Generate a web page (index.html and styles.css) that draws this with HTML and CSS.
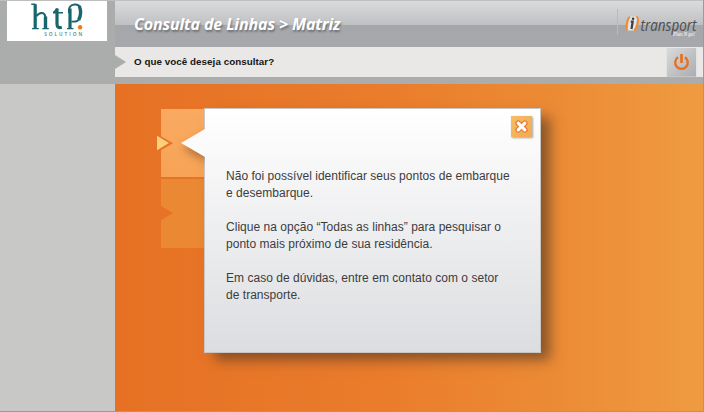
FILE: index.html
```html
<!DOCTYPE html>
<html lang="pt-BR">
<head>
<meta charset="utf-8">
<title>Consulta de Linhas</title>
<link rel="stylesheet" href="styles.css">
</head>
<body>
<div class="app">
  <aside class="sidebar">
    <div class="brand">
      <svg class="brand-logo" width="100" height="40" viewBox="0 0 100 40" role="img" aria-label="htp solution">
        <g fill="none" stroke="#17656d" stroke-linejoin="round">
          <path stroke-width="3.2" d="M28.2 3.2V27.8M50 7.5V23Q50 27.8 54.8 26.2M63 7.5V27.8"/>
          <path stroke-width="1.4" d="M24.3 3.2H28.5M25 27.6H31.8M46 11.8H56M60 27.6H66.4M35.3 27.6H41.8"/>
          <path stroke-width="2" d="M29.4 15.2Q31.8 11.8 35 12Q38.3 12.4 38.4 17M46.5 11.6L50.5 7.6M62 12Q60.8 4.2 67.5 3.6Q71.5 3.3 73 6"/>
          <path stroke-width="3.4" d="M38.5 15.5V27.8M72.3 5Q75.2 12.5 71.7 18.8"/>
          <path stroke-width="1.8" d="M72.2 18.2Q69.8 21.4 64.5 20.5"/>
        </g>
        <circle cx="73.1" cy="26.3" r="2.2" fill="#f07a13"/>
        <text class="brand-sub" x="37.2" y="34.5" textLength="38">SOLUTION</text>
      </svg>
    </div>
  </aside>
  <main class="main">
    <header class="topbar">
      <h1 class="title">Consulta de Linhas &gt; Matriz</h1>
      <svg class="product" width="86" height="36" viewBox="0 0 86 36" role="img" aria-label="i transport">
        <path d="M.5 0V26" stroke="#b9babc"/>
        <path d="M12.8 7.6H20.4L17.8 21.4H10.2Z" fill="#e6e6e6"/>
        <path d="M13.2 8Q11 8.4 9.8 14.5Q8.8 20 10.6 21.2M19.2 7.8Q21.9 8 20.6 14.5Q19.5 20.2 17 21.2" fill="none" stroke="#f28a2e" stroke-width="1.9"/>
        <path d="M13.8 12.7H15.7L14.5 20" fill="none" stroke="#3f3f41" stroke-width="2.2"/>
        <circle cx="16.1" cy="9.8" r="1.3" fill="#3f3f41"/>
        <text class="product-name" x="23.5" y="22" textLength="56" lengthAdjust="spacingAndGlyphs">transport</text>
        <text class="product-tag" x="56" y="27" textLength="22" lengthAdjust="spacingAndGlyphs">Plan N go!</text>
      </svg>
    </header>
    <div class="question">
      <span class="question-text">O que você deseja consultar?</span>
      <button class="power" aria-label="Sair">
        <svg width="18" height="18" viewBox="0 0 18 18">
          <path d="M5 4.3A6.3 6.3 0 1 0 12 4.3" fill="none" stroke="#e96d1d" stroke-width="2.3"/>
          <path d="M8.5 1V10" stroke="#e96d1d" stroke-width="2.6"/>
        </svg>
      </button>
    </div>
    <section class="stage">
      <nav class="tabs">
        <div class="tab tab-active">
          <svg class="tab-arrow" width="17" height="18" viewBox="0 0 17 18">
            <path d="M3.5 2V16.5L16 9.3Z" fill="#e67328"/>
            <path d="M0 1.8V16.2L12 9Z" fill="#fcd07b"/>
          </svg>
        </div>
        <div class="tab"></div>
      </nav>
      <div class="dialog">
        <button class="close" aria-label="Fechar">
          <svg width="15" height="15" viewBox="0 0 15 15">
            <path d="M4.2 4.2L10.8 10.8M10.8 4.2L4.2 10.8" stroke="#e97935" stroke-width="5.6" stroke-linecap="round"/>
            <path d="M4.2 4.2L10.8 10.8M10.8 4.2L4.2 10.8" stroke="#fff" stroke-width="3.1" stroke-linecap="round"/>
          </svg>
        </button>
        <div class="message">
          <p>Não foi possível identificar seus pontos de embarque<br>e desembarque.</p>
          <p>Clique na opção “Todas as linhas” para pesquisar o<br>ponto mais próximo de sua residência.</p>
          <p>Em caso de dúvidas, entre em contato com o setor<br>de transporte.</p>
        </div>
      </div>
    </section>
  </main>
</div>
</body>
</html>
```
FILE: styles.css
```css
* { box-sizing: border-box; }
body { margin: 0; font-family: "Liberation Sans", Arial, sans-serif; overflow: hidden; }
button { border: 0; padding: 0; display: flex; align-items: center; justify-content: center; }

.app {
  display: grid;
  grid-template-columns: 115px 1fr;
  width: 704px;
  height: 412px;
  border-right: 1px solid #929bab;
  border-bottom: 1px solid #929bab;
}

.sidebar { background: linear-gradient(#abadac 83px, #c8c8c6 83px); border-top: 1px solid #bdbfbe; padding-left: 7px; }
.brand { width: 100px; height: 40px; background: #fff; }
.brand-logo { display: block; }
.brand-sub { font: 600 4.8px "Open Sans", sans-serif; fill: #4b7c81; }

.main { display: flex; flex-direction: column; }
.topbar {
  height: 47px;
  flex: none;
  display: flex;
  align-items: flex-start;
  justify-content: space-between;
  padding: 0 0 0 19px;
  border-top: 1px solid #bfc0c1;
  background: linear-gradient(#dadbdd 0, #bfc0c2 24px, #a5a7aa 24px, #a7a8ab 100%);
}
.title {
  margin: 12px 0 0;
  font: italic 700 16px/22px "Open Sans", sans-serif;
  letter-spacing: -.12px;
  color: #fff;
  text-shadow: 1px 2px 2px rgba(70, 70, 75, .55);
  white-space: nowrap;
}
.product { margin-top: 8px; overflow: visible; }
.product-name { font: italic 500 17px "Open Sans", sans-serif; fill: #4c4d50; }
.product-tag { font: italic 5.5px "Liberation Serif", serif; fill: #fff; }

.question {
  position: relative;
  flex: none;
  display: flex;
  align-items: flex-start;
  justify-content: space-between;
  height: 37px;
  padding: 0 7px 0 19px;
  background: linear-gradient(#e9e8e7 30px, #abadac 30px);
}
.question::before {
  content: "";
  position: absolute;
  left: 0;
  top: 8px;
  border-left: 11px solid #abadac;
  border-top: 7px solid transparent;
  border-bottom: 7px solid transparent;
}
.question-text { font-size: 9.8px; font-weight: 700; line-height: 30px; letter-spacing: .05px; color: #161616; white-space: nowrap; }
.power { width: 29px; height: 28px; margin-top: 1px; background: linear-gradient(135deg, #d9dadb, #abadb0); box-shadow: 0 1px 1px #c4c4c4; }

.stage {
  flex: 1;
  display: flex;
  padding: 24px 0 0 46px;
  background: linear-gradient(90deg, #e67124, #ea7c2c 45%, #ec8b35 75%, #ef9b42);
}
.tabs { width: 43px; display: flex; flex-direction: column; gap: 2px; padding-top: 1px; }
.tab { position: relative; height: 69px; background: #ea8833; }
.tab-active { height: 68px; background: linear-gradient(#f9aa61, #f7a355); }
.tab:last-child::before {
  content: "";
  position: absolute;
  top: 27px;
  left: 0;
  border-left: 12px solid #e67328;
  border-top: 7.5px solid transparent;
  border-bottom: 7.5px solid transparent;
}
.tab-arrow { position: absolute; left: -4px; top: 25px; }

.dialog {
  position: relative;
  width: 337px;
  height: 245px;
  border: 1px solid #cbc5bf;
  background: linear-gradient(#fff, #dcdde0);
  box-shadow: 10px 8px 12px -1px rgba(70, 50, 35, .6);
}
.dialog::before {
  content: "";
  position: absolute;
  left: -24px;
  top: 20px;
  border-right: 24px solid #fbfbfb;
  border-top: 14px solid transparent;
  border-bottom: 14px solid transparent;
  filter: drop-shadow(2px 5px 4px rgba(90, 45, 15, .45));
  clip-path: inset(-4px 0 -18px -4px);
}
.close {
  position: absolute;
  top: 7px;
  right: 8px;
  width: 21px;
  height: 21px;
  background: linear-gradient(135deg, #f4bd66, #f3aa50);
  box-shadow: 1px 1px 2px rgba(0, 0, 0, .35);
}
.message { padding: 59px 0 0 21px; font-size: 12px; line-height: 17px; letter-spacing: .03px; color: #3c3c3e; white-space: nowrap; }
.message p { margin: 0 0 17px; }
```
